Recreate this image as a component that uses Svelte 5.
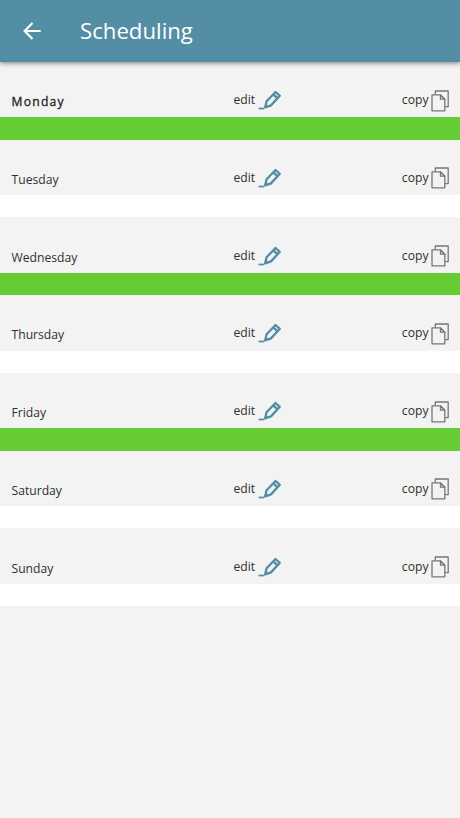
<script>
  const days = [
    { name: 'Monday', active: true, today: true },
    { name: 'Tuesday' },
    { name: 'Wednesday', active: true },
    { name: 'Thursday' },
    { name: 'Friday', active: true },
    { name: 'Saturday' },
    { name: 'Sunday' }
  ];
</script>

<div class="screen">
  <header>
    <svg class="back" viewBox="0 0 18 18" aria-label="Back">
      <path d="M17.7 9H2M9.5 1L1.6 9l7.9 8" fill="none" stroke="#fff" stroke-width="2.1" />
    </svg>
    <h1>Scheduling</h1>
  </header>

  <main>
    {#each days as day}
      <section>
        <div class="row">
          <span class="name" class:today={day.today}>{day.name}</span>
          <span class="action edit">
            <span class="label">edit</span>
            <svg width="24" height="20" viewBox="0 0 24 20">
              <g fill="none" stroke="#508ea5" stroke-linejoin="round">
                <path d="M0.5 18.5h5.6" stroke-width="1.7" />
                <path d="M8.6 11.3L17.5 2l4.3 3.8-8.8 9.6-5.8 1.9z" stroke-width="2.3" />
                <path d="M15.2 4.4l4.2 3.7" stroke-width="2.4" />
              </g>
              <path d="M7.6 13.8l3 2.8-4.7 1.8z" fill="#508ea5" />
            </svg>
          </span>
          <span class="action copy">
            <span class="label">copy</span>
            <svg width="18" height="22" viewBox="0 0 18 22">
              <g fill="none" stroke="#777" stroke-width="1.3" stroke-linejoin="round">
                <path d="M4.3 4.5V1h12.9v15.7h-3" />
                <path d="M1 4.9h8.5l4.3 4.3v11.6H1z" />
                <path d="M9.5 4.9v4.3h4.3z" />
              </g>
            </svg>
          </span>
        </div>
        <div class="bar" class:active={day.active}></div>
      </section>
    {/each}
  </main>
</div>

<style>
  :global(body) {
    margin: 0;
    background: #f3f3f3;
  }
  .screen {
    height: 818px;
    overflow: hidden;
    background: #f3f3f3;
    color: #303030;
    font-family: 'Open Sans', 'Noto Sans', sans-serif;
  }
  header {
    position: relative;
    display: flex;
    align-items: center;
    box-sizing: border-box;
    height: 62px;
    padding-left: 22.5px;
    background: #538ea5;
    box-shadow: 0 1px 5px rgba(0, 0, 0, 0.5);
  }
  .back {
    width: 18px;
    height: 18px;
  }
  h1 {
    margin: 0 0 0 39.5px;
    color: #fff;
    font-size: 22.2px;
    font-weight: 400;
    line-height: 30px;
  }
  section {
    height: 77.75px;
  }
  .row {
    display: flex;
    box-sizing: border-box;
    height: 55.4px;
    padding: 27px 11px 0 11.5px;
  }
  .name {
    width: 222px;
    padding-top: 4px;
    font-size: 12.15px;
    line-height: 18px;
  }
  .today {
    color: #222;
    letter-spacing: 1.25px;
    -webkit-text-stroke: 0.3px #222;
  }
  .action {
    display: flex;
    font-size: 12.15px;
    line-height: 18px;
  }
  .label {
    padding-top: 2px;
  }
  .edit svg {
    margin: 1px 0 0 3px;
  }
  .copy {
    margin-left: auto;
  }
  .copy svg {
    margin: 0.6px 0 0 2.5px;
  }
  .bar {
    height: 22.35px;
    background: #fff;
  }
  .bar.active {
    background: #66cc33;
  }
</style>
